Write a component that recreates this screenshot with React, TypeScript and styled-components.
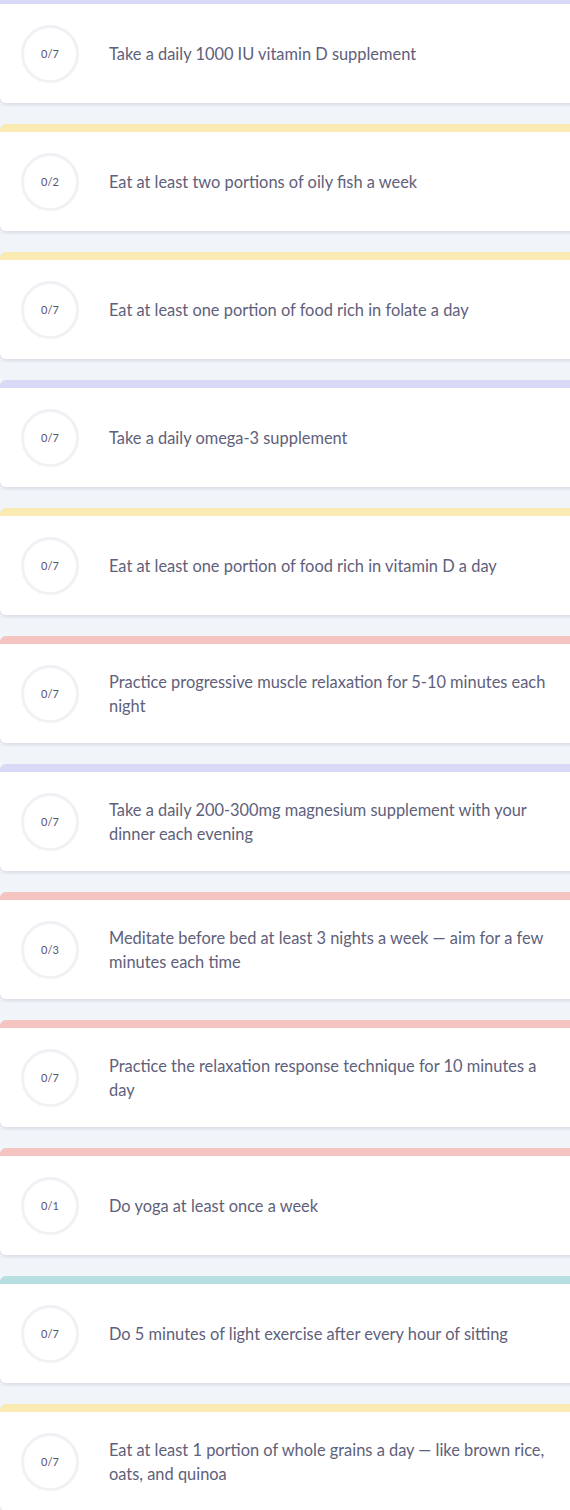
import styled, { createGlobalStyle } from 'styled-components';

const GlobalStyle = createGlobalStyle`
  html, body {
    margin: 0;
    padding: 0;
    background: #f1f5f9;
  }
  body {
    font-family: 'Lato', 'Noto Sans', sans-serif;
    -webkit-font-smoothing: antialiased;
  }
`;

const List = styled.div`
  display: flex;
  flex-direction: column;
  gap: 21px;
  margin-top: -4px;
  overflow: hidden;
`;

const Card = styled.div<{ $accent: string }>`
  display: flex;
  align-items: center;
  height: 99px;
  margin-right: -10px;
  background: #fff;
  border-top: 8px solid ${(p) => p.$accent};
  border-radius: 6px 0 0 6px;
  box-shadow: 0 2px 3px rgba(60, 70, 100, 0.12);
`;

const Ring = styled.div`
  flex: 0 0 auto;
  width: 52px;
  height: 52px;
  margin-left: 21px;
  border: 3px solid #f0f1f5;
  border-radius: 50%;
  display: flex;
  align-items: center;
  justify-content: center;
  font-size: 11px;
  color: #56566e;
`;

const Label = styled.div`
  margin-left: 30px;
  margin-right: 26px;
  font-size: 16.4px;
  line-height: 24px;
  color: #60607a;
`;

type Habit = { done: number; total: number; text: string; accent: string };

const LAVENDER = '#d9d9f6';
const YELLOW = '#fbeab1';
const PINK = '#f5c4c0';
const TEAL = '#b5dfe1';

const habits: Habit[] = [
  { done: 0, total: 7, text: 'Take a daily 1000 IU vitamin D supplement', accent: LAVENDER },
  { done: 0, total: 2, text: 'Eat at least two portions of oily fish a week', accent: YELLOW },
  { done: 0, total: 7, text: 'Eat at least one portion of food rich in folate a day', accent: YELLOW },
  { done: 0, total: 7, text: 'Take a daily omega-3 supplement', accent: LAVENDER },
  { done: 0, total: 7, text: 'Eat at least one portion of food rich in vitamin D a day', accent: YELLOW },
  { done: 0, total: 7, text: 'Practice progressive muscle relaxation for 5-10 minutes each night', accent: PINK },
  { done: 0, total: 7, text: 'Take a daily 200-300mg magnesium supplement with your dinner each evening', accent: LAVENDER },
  { done: 0, total: 3, text: 'Meditate before bed at least 3 nights a week — aim for a few minutes each time', accent: PINK },
  { done: 0, total: 7, text: 'Practice the relaxation response technique for 10 minutes a day', accent: PINK },
  { done: 0, total: 1, text: 'Do yoga at least once a week', accent: PINK },
  { done: 0, total: 7, text: 'Do 5 minutes of light exercise after every hour of sitting', accent: TEAL },
  { done: 0, total: 7, text: 'Eat at least 1 portion of whole grains a day — like brown rice, oats, and quinoa', accent: YELLOW },
];

export default function App() {
  return (
    <>
      <GlobalStyle />
      <List>
        {habits.map((h, i) => (
          <Card key={i} $accent={h.accent}>
            <Ring>
              {h.done}/{h.total}
            </Ring>
            <Label>{h.text}</Label>
          </Card>
        ))}
      </List>
    </>
  );
}
